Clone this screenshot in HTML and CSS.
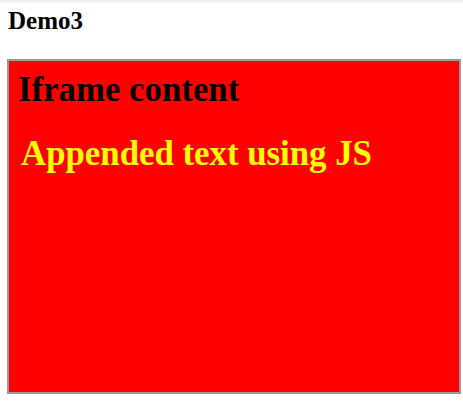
FILE: index.html
```html
<!DOCTYPE html>
<html>
<head>
<meta charset="utf-8">
<link rel="stylesheet" href="styles.css">
</head>
<body>
<div class="title">Demo3</div>
<div class="frame">
  <h1 class="heading">Iframe content</h1>
  <h1 class="heading appended">Appended text using JS</h1>
</div>
</body>
</html>
```
FILE: styles.css
```css
html {
  background: linear-gradient(#e9e9e9, #ffffff 4px) no-repeat;
  background-color: #fff;
}
body {
  margin: 0;
  padding: 7px 2px 0 7px;
  font-family: "Liberation Serif", "Times New Roman", serif;
}
.title {
  font-weight: bold;
  font-size: 25px;
  margin-left: 1px;
  height: 28px;
  margin-bottom: 24px;
}
.frame {
  box-sizing: border-box;
  width: 454px;
  height: 335px;
  border: 2px solid #999;
  background: #ff0000;
  padding: 9px 9px 0 9px;
  overflow: hidden;
}
.heading {
  margin: 0 0 23.5px 0;
  font-size: 34.8px;
  font-weight: bold;
  color: #000;
  line-height: 40px;
}
.appended {
  color: #ffff00;
  padding-left: 3px;
}
```
